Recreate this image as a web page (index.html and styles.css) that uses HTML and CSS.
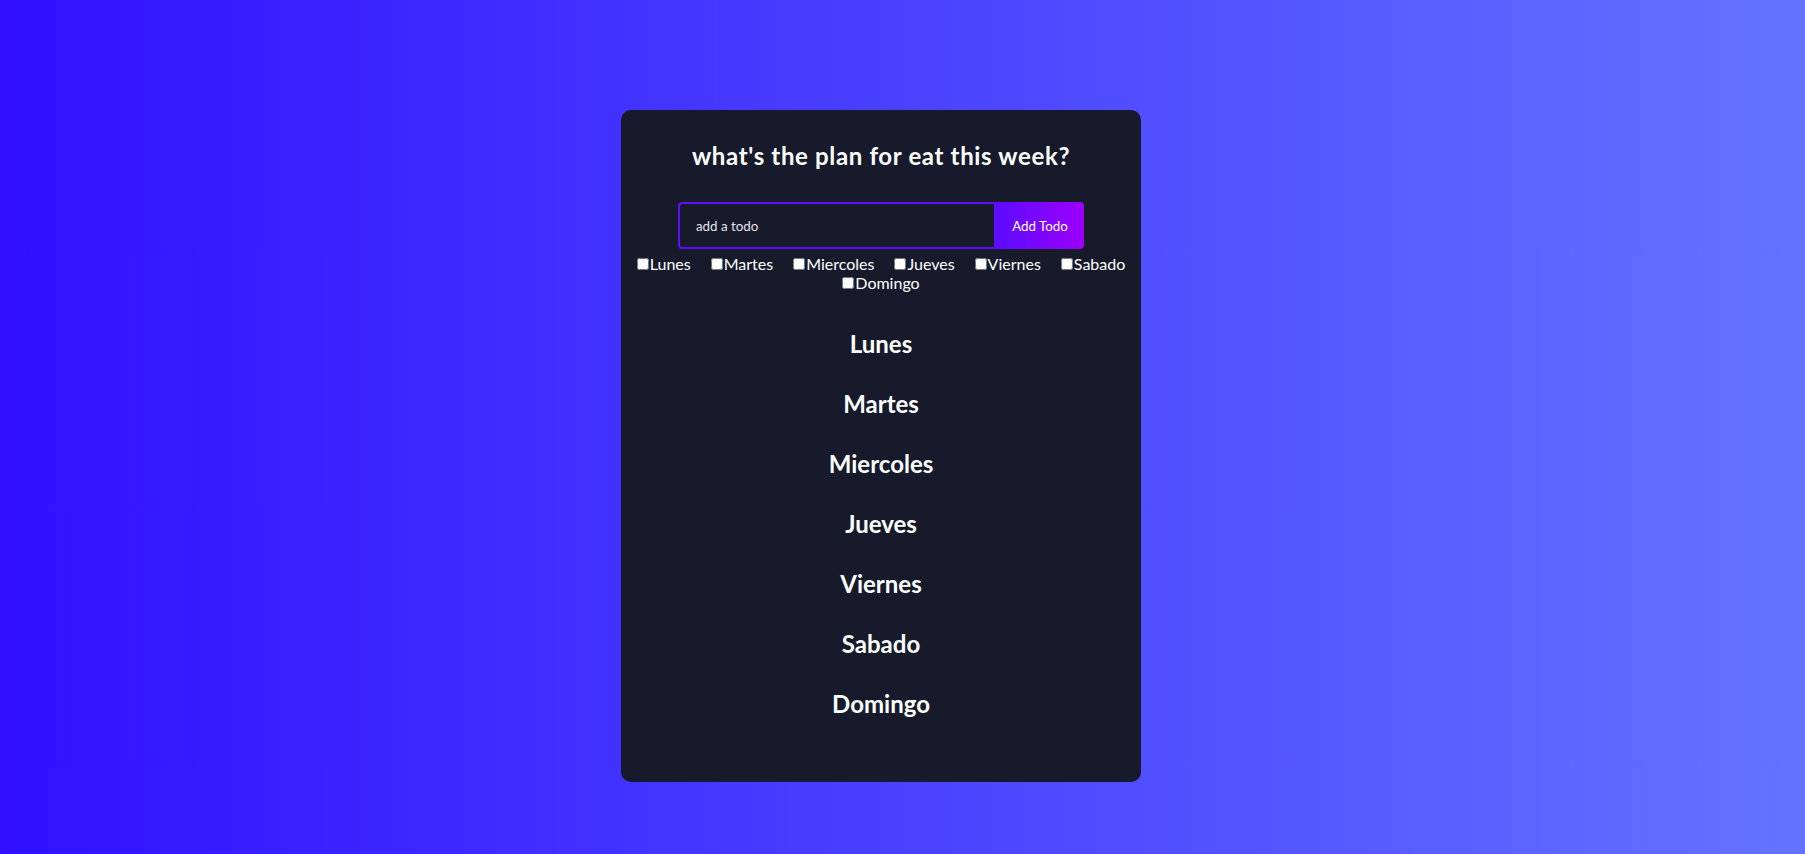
FILE: index.html
```html
<!DOCTYPE html>
<html lang="en">
<head>
<meta charset="utf-8">
<title>Todo</title>
<link rel="stylesheet" href="styles.css">
</head>
<body>
  <div class="todo-app">
    <h1 class="title">what's the plan for eat this week?</h1>
    <form class="todo-form">
      <input class="todo-input" type="text" placeholder="add a todo">
      <button class="todo-button" type="button">Add Todo</button>
    </form>
    <div class="day-picks">
      <label class="day-pick"><input type="checkbox">Lunes</label>
      <label class="day-pick"><input type="checkbox">Martes</label>
      <label class="day-pick"><input type="checkbox">Miercoles</label>
      <label class="day-pick"><input type="checkbox">Jueves</label>
      <label class="day-pick"><input type="checkbox">Viernes</label>
      <label class="day-pick"><input type="checkbox">Sabado</label>
      <label class="day-pick"><input type="checkbox">Domingo</label>
    </div>
    <div class="day-list">
      <h2 class="day-title">Lunes</h2>
      <h2 class="day-title">Martes</h2>
      <h2 class="day-title">Miercoles</h2>
      <h2 class="day-title">Jueves</h2>
      <h2 class="day-title">Viernes</h2>
      <h2 class="day-title">Sabado</h2>
      <h2 class="day-title">Domingo</h2>
    </div>
  </div>
</body>
</html>
```
FILE: styles.css
```css
* {
  box-sizing: border-box;
}

html, body {
  margin: 0;
  padding: 0;
}

body {
  min-height: 854px;
  background: linear-gradient(90deg, #3010ff 0%, #6473ff 100%);
  font-family: "Trebuchet MS", Lato, "Liberation Sans", sans-serif;
  overflow: hidden;
}

.todo-app {
  width: 520px;
  margin: 110px 0 0 621px;
  background: #161a2b;
  border-radius: 10px;
  text-align: center;
  padding-bottom: 64px;
  display: flex;
  flex-direction: column;
}

.title {
  margin: 0;
  padding-top: 32px;
  font-size: 24px;
  line-height: 28px;
  font-weight: 700;
  letter-spacing: 0.65px;
  color: #ffffff;
}

.todo-form {
  margin-top: 32px;
  display: flex;
  justify-content: center;
}

.todo-input {
  width: 318px;
  height: 47px;
  padding: 14px 32px 14px 16px;
  border: 2px solid #5d0cff;
  border-radius: 4px 0 0 4px;
  background: transparent;
  color: #ffffff;
  font-family: inherit;
  font-size: 13.33px;
  outline: none;
}

.todo-input::placeholder {
  color: #e2e2e8;
  opacity: 1;
}

.todo-button {
  width: 88px;
  height: 47px;
  padding: 0 16px;
  border: none;
  border-radius: 0 4px 4px 0;
  background: linear-gradient(90deg, #5d0cff 0%, #9b00fa 100%);
  color: #ffffff;
  font-family: inherit;
  font-size: 13.33px;
}

.day-picks {
  width: 500px;
  margin: 6px auto 0;
  display: flex;
  flex-wrap: wrap;
  justify-content: center;
  column-gap: 20px;
  font-size: 16px;
  line-height: 18.5px;
  color: #ffffff;
}

.day-pick {
  display: inline-flex;
  align-items: center;
}

.day-pick input {
  width: 12px;
  height: 12px;
  margin: 0 1px 0 0;
}

.day-list {
  margin-top: 38px;
  display: flex;
  flex-direction: column;
  gap: 32px;
}

.day-title {
  margin: 0;
  font-size: 24px;
  line-height: 28px;
  font-weight: 700;
  color: #ffffff;
}
```
